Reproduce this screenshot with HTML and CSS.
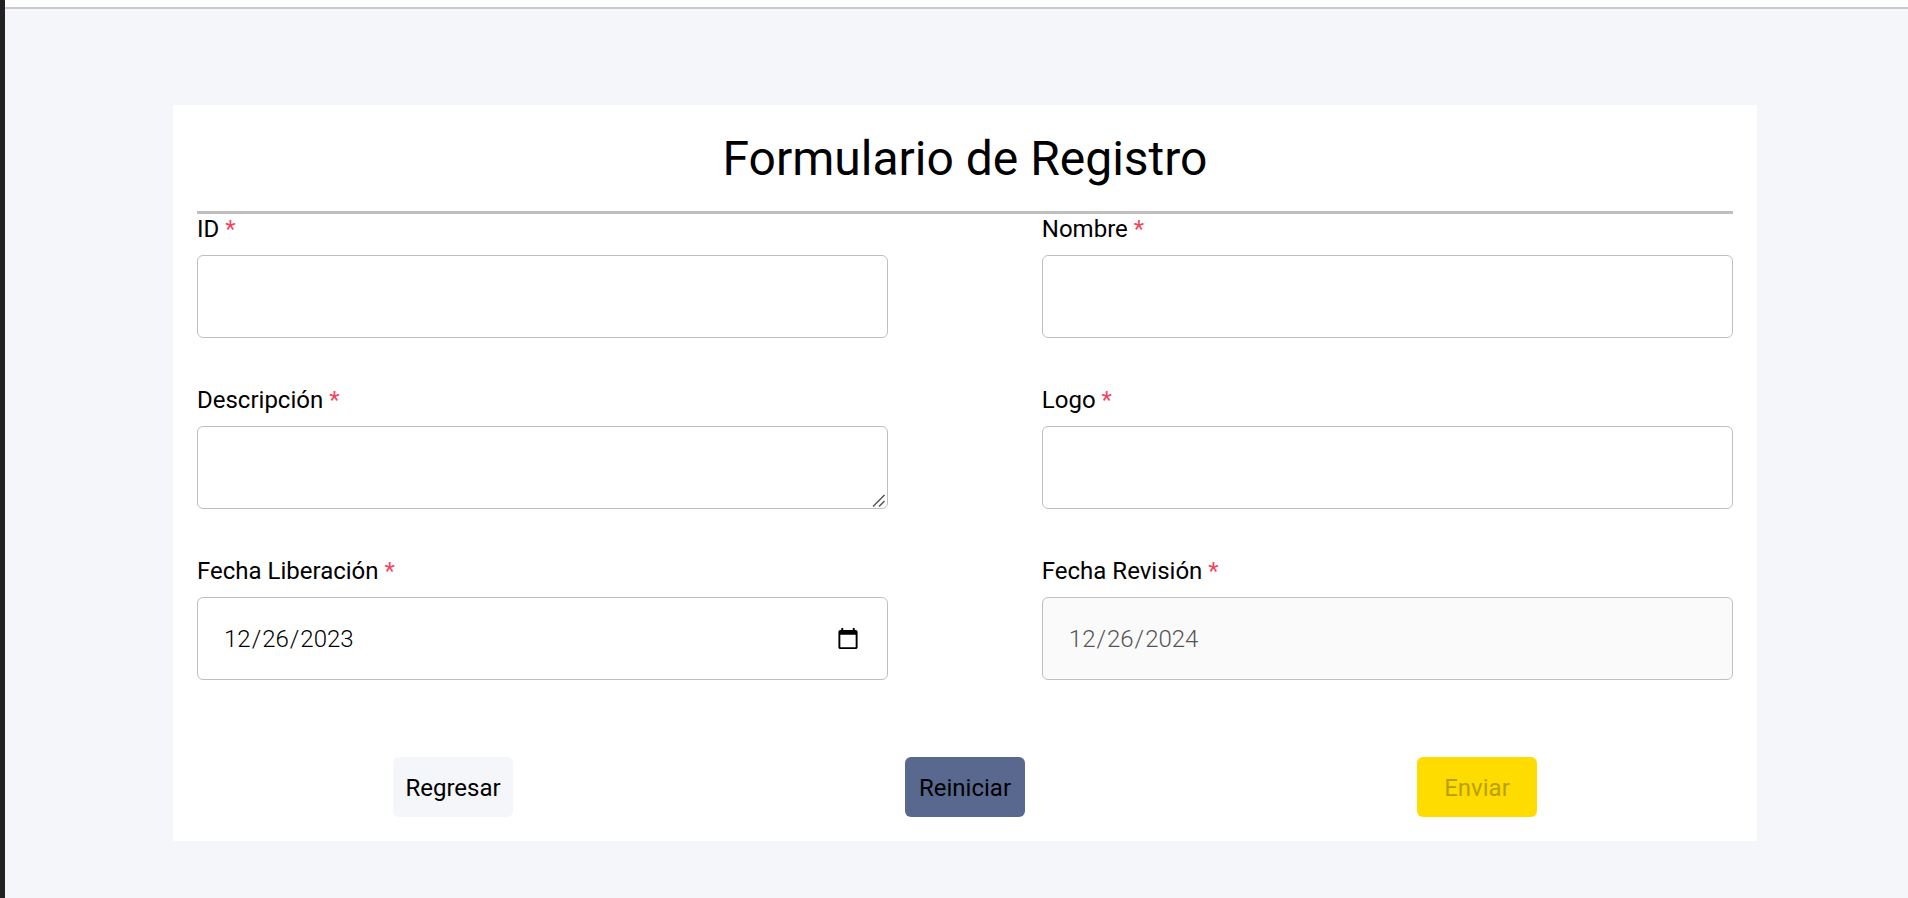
FILE: index.html
```html
<!DOCTYPE html>
<html lang="en-US">
<head>
<meta charset="utf-8">
<meta name="viewport" content="width=device-width, initial-scale=1">
<title>Formulario de Registro</title>
<link rel="stylesheet" href="styles.css">
</head>
<body>
<div class="app">
  <aside class="sidebar"></aside>
  <div class="page">
    <header class="topbar"></header>
    <main class="content">
      <form class="card">
        <h1 class="card-title">Formulario de Registro</h1>
        <div class="fields">
          <div class="field">
            <label class="field-label" for="id">ID <span class="required">*</span></label>
            <input class="field-control" id="id" type="text">
          </div>
          <div class="field">
            <label class="field-label" for="nombre">Nombre <span class="required">*</span></label>
            <input class="field-control" id="nombre" type="text">
          </div>
          <div class="field">
            <label class="field-label" for="descripcion">Descripción <span class="required">*</span></label>
            <textarea class="field-control" id="descripcion" rows="1"></textarea>
          </div>
          <div class="field">
            <label class="field-label" for="logo">Logo <span class="required">*</span></label>
            <input class="field-control" id="logo" type="text">
          </div>
          <div class="field">
            <label class="field-label" for="liberacion">Fecha Liberación <span class="required">*</span></label>
            <input class="field-control" id="liberacion" type="date" value="2023-12-26">
          </div>
          <div class="field">
            <label class="field-label" for="revision">Fecha Revisión <span class="required">*</span></label>
            <input class="field-control" id="revision" type="date" value="2024-12-26" disabled>
          </div>
        </div>
        <div class="actions">
          <button class="button button-back" type="button">Regresar</button>
          <button class="button button-reset" type="reset">Reiniciar</button>
          <button class="button button-submit" type="submit" disabled>Enviar</button>
        </div>
      </form>
    </main>
  </div>
</div>
</body>
</html>
```
FILE: styles.css
```css
* {
  box-sizing: border-box;
}

body {
  margin: 0;
  font-family: Roboto, "Liberation Sans", sans-serif;
  font-size: 24px;
  color: #000;
  background: #f4f6fa;
}

.app {
  display: flex;
  min-height: 100vh;
}

.sidebar {
  flex: none;
  width: 5px;
  background: #222;
}

.page {
  flex: 1;
  min-width: 0;
}

.topbar {
  height: 9px;
  background: #fff;
  border-bottom: 2px solid #c9cbcb;
}

.content {
  padding: 96px 151px 57px 168px;
}

.card {
  padding: 24px;
  background: #fff;
}

.card-title {
  margin: 0;
  padding-bottom: 22px;
  border-bottom: 3px solid #bfbfbf;
  font-size: 48px;
  font-weight: 400;
  line-height: 60px;
  text-align: center;
}

.fields {
  display: grid;
  grid-template-columns: 45% 45%;
  justify-content: space-between;
  row-gap: 47px;
}

.field {
  display: flex;
  flex-direction: column;
}

.field-label {
  padding-bottom: 10px;
  line-height: 31px;
}

.required {
  color: #f44460;
}

.field-control {
  display: block;
  width: 100%;
  height: 83px;
  padding: 24px 25px;
  border: 1px solid #bfbfbf;
  border-radius: 6px;
  background: #fff;
  color: #000;
  font-family: inherit;
  font-size: 24px;
  font-weight: 300;
  outline: 0;
}

.field-control:disabled {
  background: #fafafa;
  color: #545454;
}

.field-control::-webkit-scrollbar {
  width: 15px;
  height: 15px;
}

.field-control::-webkit-resizer {
  background: url("data:image/svg+xml,%3Csvg xmlns='http://www.w3.org/2000/svg' width='15' height='15'%3E%3Cpath d='M1 13.5 12.5 2M7 13.5 12.5 8' fill='none' stroke='%23555' stroke-width='1.5'/%3E%3C/svg%3E") no-repeat;
}

.actions {
  display: grid;
  grid-template-columns: repeat(3, 1fr);
  justify-items: center;
  padding-top: 77px;
}

.button {
  width: 120px;
  height: 60px;
  padding: 2px 0 0;
  border: 0;
  border-radius: 6px;
  color: #000;
  font-family: inherit;
  font-size: 24px;
}

.button-back {
  background: #f4f6fa;
}

.button-reset {
  background: #58688f;
}

.button-submit {
  background: #ffdc00;
  color: #b8a00c;
}
```
